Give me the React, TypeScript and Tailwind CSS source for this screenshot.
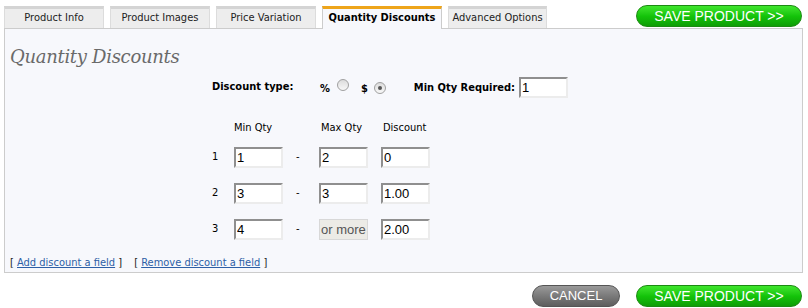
const tabs = [
  { name: "Product Info", w: "w-[100px]" },
  { name: "Product Images", w: "w-[100px]" },
  { name: "Price Variation", w: "w-[100px]" },
  { name: "Quantity Discounts", w: "w-[120px]", active: true },
  { name: "Advanced Options", w: "w-[99px]" },
];

const rows = [
  { n: 1, min: "1", max: "2", disc: "0" },
  { n: 2, min: "3", max: "3", disc: "1.00" },
  { n: 3, min: "4", max: null, disc: "2.00" },
];

const sans = "font-['DejaVu_Sans_Condensed','DejaVu_Sans',sans-serif]";
const inputCls =
  "h-[21px] w-[49px] border-2 border-t-[#8f8f8f] border-l-[#8f8f8f] border-b-[#ececec] border-r-[#ececec] bg-white px-[1px] text-[13px] leading-[17px] text-black font-['Liberation_Sans',Arial,sans-serif]";

function SaveButton() {
  return (
    <button className="h-[22px] w-[166px] rounded-full border border-[#1c8a12] bg-gradient-to-b from-[#3ee62c] via-[#14c40a] to-[#0e9e06] text-[14px] leading-[20px] text-white font-['Liberation_Sans',Arial,sans-serif]">
      SAVE PRODUCT &gt;&gt;
    </button>
  );
}

function Radio({ checked }: { checked?: boolean }) {
  return (
    <span className="inline-flex h-[12px] w-[12px] items-center justify-center rounded-full border border-[#a0a0a0] bg-gradient-to-b from-[#dcdcdc] to-[#f8f8f8]">
      {checked && <span className="h-[4px] w-[4px] rounded-full bg-[#555]" />}
    </span>
  );
}

export default function App() {
  return (
    <div className={`w-[808px] h-[308px] bg-white ${sans} text-[11px] text-black`}>
      <div className="flex items-end justify-between pl-[4px] pr-[6px] pt-[5px]">
        <div className="flex gap-[6px]">
          {tabs.map((t) =>
            t.active ? (
              <div
                key={t.name}
                className={`${t.w} h-[23px] -mb-px border-t-[3px] border-x border-t-[#eea51a] border-x-[#ccc] bg-[#f7f8fc] text-center font-bold leading-[18px] relative z-10`}
              >
                {t.name}
              </div>
            ) : (
              <div
                key={t.name}
                className={`${t.w} h-[22px] border-t-[3px] border-x border-t-[#d4d4d4] border-x-[#dcdcdc] bg-[#ededed] text-center leading-[18px] text-[#222]`}
              >
                {t.name}
              </div>
            )
          )}
        </div>
        <div className="mb-[1px]">
          <SaveButton />
        </div>
      </div>

      <div className="mx-[4px] mr-[5px] h-[245px] border border-[#cccccc] bg-[#f7f8fc] px-[5px]">
        <h2 className="mt-[17px] text-[18px] italic leading-[22px] text-[#6a6a6a] font-['DejaVu_Serif',Georgia,serif] tracking-[-0.3px]">
          Quantity Discounts
        </h2>

        <div className="mt-[9px] flex items-center pl-[202px]">
          <span className="font-bold w-[108px]">Discount type:</span>
          <span className="font-bold mt-[3px]">%</span>
          <span className="ml-[7px]"><Radio /></span>
          <span className="ml-[12px] font-bold mt-[3px]">$</span>
          <span className="ml-[6px]"><Radio checked /></span>
          <span className="ml-[28px] font-bold mt-[1px]">Min Qty Required:</span>
          <input className={`${inputCls} ml-[4px]`} defaultValue="1" readOnly />
        </div>

        <div className="mt-[22px] flex pl-[224px]">
          <span className="w-[87px]">Min Qty</span>
          <span className="w-[62px]">Max Qty</span>
          <span>Discount</span>
        </div>

        <div className="mt-[10px] flex flex-col gap-[15px] pl-[202px]">
          {rows.map((r) => (
            <div key={r.n} className="flex items-center">
              <span className="w-[22px]">{r.n}</span>
              <input className={inputCls} defaultValue={r.min} readOnly />
              <span className="w-[36px] pl-[13px]">-</span>
              {r.max !== null ? (
                <input className={inputCls} defaultValue={r.max} readOnly />
              ) : (
                <div className="h-[21px] w-[49px] border border-[#d8d8d8] bg-[#ecebe6] px-[1px] text-[13px] leading-[19px] text-[#555] font-['Liberation_Sans',Arial,sans-serif]">
                  or more
                </div>
              )}
              <span className="w-[13px]" />
              <input className={inputCls} defaultValue={r.disc} readOnly />
            </div>
          ))}
        </div>

        <div className="mt-[15px] flex text-[11px] text-[#222]">
          <span>
            [ <a href="#" className="text-[#2d5fa6] underline">Add discount a field</a> ]
          </span>
          <span className="ml-[12px]">
            [ <a href="#" className="text-[#2d5fa6] underline">Remove discount a field</a> ]
          </span>
        </div>
      </div>

      <div className="mt-[12px] flex justify-end gap-[16px] pr-[6px]">
        <button className="h-[22px] w-[88px] rounded-full border border-[#555] bg-gradient-to-b from-[#9a9a9a] via-[#7a7a7a] to-[#5e5e5e] text-[13px] leading-[20px] text-white font-['Liberation_Sans',Arial,sans-serif]">
          CANCEL
        </button>
        <SaveButton />
      </div>
    </div>
  );
}
